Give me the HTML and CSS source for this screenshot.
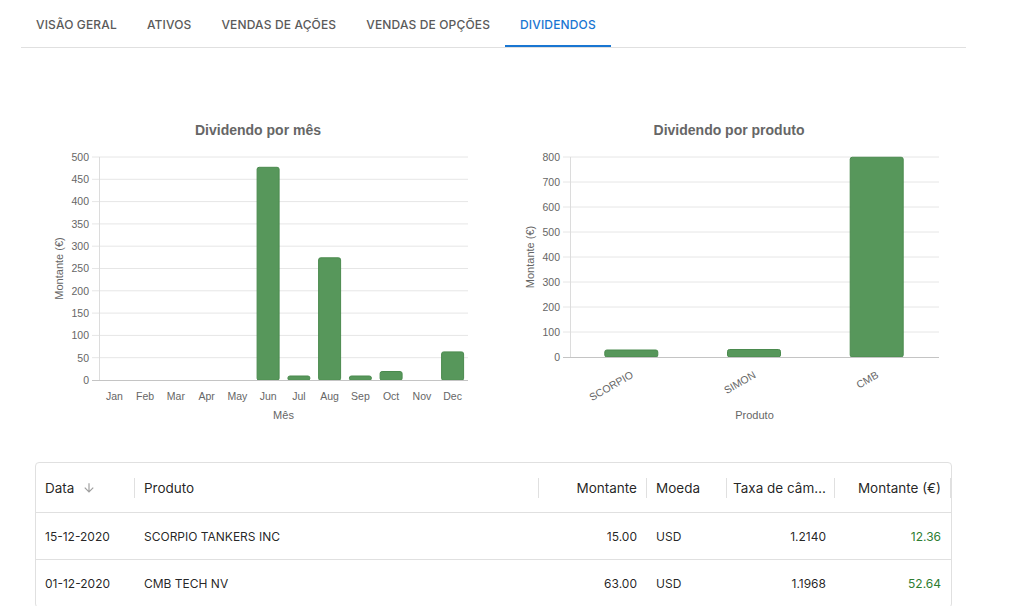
FILE: index.html
```html
<!DOCTYPE html>
<html lang="pt">
<head>
<meta charset="utf-8">
<title>Dividendos</title>
<link rel="stylesheet" href="styles.css">
</head>
<body>
<div class="page">
  <nav class="tabs">
    <div class="tab">Visão geral</div>
    <div class="tab">Ativos</div>
    <div class="tab">Vendas de ações</div>
    <div class="tab">Vendas de opções</div>
    <div class="tab active">Dividendos</div>
  </nav>

  <main class="content">
    <section class="charts">
      <figure class="chart">
        <svg class="chart-svg" width="446" height="330" viewBox="0 0 446 330">
          <text class="c-title" x="223" y="35" text-anchor="middle">Dividendo por mês</text>
          <g class="grid">
            <line x1="57" y1="57" x2="433" y2="57"/>
            <line x1="57" y1="79.3" x2="433" y2="79.3"/>
            <line x1="57" y1="101.6" x2="433" y2="101.6"/>
            <line x1="57" y1="123.9" x2="433" y2="123.9"/>
            <line x1="57" y1="146.2" x2="433" y2="146.2"/>
            <line x1="57" y1="168.5" x2="433" y2="168.5"/>
            <line x1="57" y1="190.8" x2="433" y2="190.8"/>
            <line x1="57" y1="213.1" x2="433" y2="213.1"/>
            <line x1="57" y1="235.4" x2="433" y2="235.4"/>
            <line x1="57" y1="257.7" x2="433" y2="257.7"/>
          </g>
          <line class="axis" x1="64.5" y1="57" x2="64.5" y2="280"/>
          <g class="ticks" text-anchor="end">
            <text x="54" y="60.8">500</text>
            <text x="54" y="83.1">450</text>
            <text x="54" y="105.4">400</text>
            <text x="54" y="127.7">350</text>
            <text x="54" y="150">300</text>
            <text x="54" y="172.3">250</text>
            <text x="54" y="194.6">200</text>
            <text x="54" y="216.9">150</text>
            <text x="54" y="239.2">100</text>
            <text x="54" y="261.5">50</text>
            <text x="54" y="283.8">0</text>
          </g>
          <g class="bars">
            <rect x="222.1" y="67.3" width="22" height="213" rx="2"/>
            <rect x="252.9" y="276" width="22" height="4.3" rx="2"/>
            <rect x="283.6" y="157.8" width="22" height="122.5" rx="2"/>
            <rect x="314.4" y="276" width="22" height="4.3" rx="2"/>
            <rect x="345.1" y="271.5" width="22" height="8.8" rx="2"/>
            <rect x="406.6" y="251.9" width="22" height="28.4" rx="2"/>
          </g>
          <line class="zero" x1="57" y1="280.5" x2="433" y2="280.5"/>
          <g class="ticks" text-anchor="middle">
            <text x="79.4" y="300">Jan</text>
            <text x="110.1" y="300">Feb</text>
            <text x="140.9" y="300">Mar</text>
            <text x="171.6" y="300">Apr</text>
            <text x="202.4" y="300">May</text>
            <text x="233.1" y="300">Jun</text>
            <text x="263.9" y="300">Jul</text>
            <text x="294.6" y="300">Aug</text>
            <text x="325.4" y="300">Sep</text>
            <text x="356.1" y="300">Oct</text>
            <text x="386.9" y="300">Nov</text>
            <text x="417.6" y="300">Dec</text>
          </g>
          <text class="a-title" x="248.5" y="319" text-anchor="middle">Mês</text>
          <text class="a-title" text-anchor="middle" dominant-baseline="central" transform="translate(24 168.5) rotate(-90)">Montante (€)</text>
        </svg>
      </figure>

      <figure class="chart">
        <svg class="chart-svg" width="446" height="330" viewBox="0 0 446 330">
          <text class="c-title" x="223" y="35" text-anchor="middle">Dividendo por produto</text>
          <g class="grid">
            <line x1="57" y1="57" x2="433" y2="57"/>
            <line x1="57" y1="82" x2="433" y2="82"/>
            <line x1="57" y1="107" x2="433" y2="107"/>
            <line x1="57" y1="132" x2="433" y2="132"/>
            <line x1="57" y1="157" x2="433" y2="157"/>
            <line x1="57" y1="182" x2="433" y2="182"/>
            <line x1="57" y1="207" x2="433" y2="207"/>
            <line x1="57" y1="232" x2="433" y2="232"/>
          </g>
          <line class="axis" x1="64.5" y1="57" x2="64.5" y2="257"/>
          <g class="ticks" text-anchor="end">
            <text x="54" y="60.8">800</text>
            <text x="54" y="85.8">700</text>
            <text x="54" y="110.8">600</text>
            <text x="54" y="135.8">500</text>
            <text x="54" y="160.8">400</text>
            <text x="54" y="185.8">300</text>
            <text x="54" y="210.8">200</text>
            <text x="54" y="235.8">100</text>
            <text x="54" y="260.8">0</text>
          </g>
          <g class="bars">
            <rect x="98.8" y="250" width="53" height="7" rx="2"/>
            <rect x="221.5" y="249.5" width="53" height="7.5" rx="2"/>
            <rect x="344.2" y="57.25" width="53" height="199.75" rx="2"/>
          </g>
          <line class="zero" x1="57" y1="257.5" x2="433" y2="257.5"/>
          <g class="ticks" text-anchor="end">
            <text transform="translate(128 277) rotate(-30)">SCORPIO</text>
            <text transform="translate(250.5 277) rotate(-30)">SIMON</text>
            <text transform="translate(373.2 277) rotate(-30)">CMB</text>
          </g>
          <text class="a-title" x="248.5" y="319" text-anchor="middle">Produto</text>
          <text class="a-title" text-anchor="middle" dominant-baseline="central" transform="translate(24 157) rotate(-90)">Montante (€)</text>
        </svg>
      </figure>
    </section>

    <section class="table">
      <div class="row head">
        <div class="cell c-date">Data
          <svg class="sort" width="14" height="14" viewBox="0 0 24 24"><path d="M20 12l-1.41-1.41L13 16.17V4h-2v12.17l-5.58-5.59L4 12l8 8 8-8z"/></svg>
          <span class="sep"></span></div>
        <div class="cell c-prod">Produto<span class="sep"></span></div>
        <div class="cell c-amt num">Montante<span class="sep"></span></div>
        <div class="cell c-cur">Moeda<span class="sep"></span></div>
        <div class="cell c-rate"><span class="trunc">Taxa de câmbio</span><span class="sep"></span></div>
        <div class="cell c-eur num">Montante (€)<span class="sep"></span></div>
      </div>
      <div class="row">
        <div class="cell c-date">15-12-2020</div>
        <div class="cell c-prod">SCORPIO TANKERS INC</div>
        <div class="cell c-amt num">15.00</div>
        <div class="cell c-cur">USD</div>
        <div class="cell c-rate num">1.2140</div>
        <div class="cell c-eur num pos">12.36</div>
      </div>
      <div class="row">
        <div class="cell c-date">01-12-2020</div>
        <div class="cell c-prod">CMB TECH NV</div>
        <div class="cell c-amt num">63.00</div>
        <div class="cell c-cur">USD</div>
        <div class="cell c-rate num">1.1968</div>
        <div class="cell c-eur num pos">52.64</div>
      </div>
    </section>
  </main>
</div>
</body>
</html>
```

FILE: styles.css
```css
html, body {
  margin: 0;
  padding: 0;
  background: #fff;
  overflow: hidden;
}
body {
  font-family: "Inter", "Noto Sans", sans-serif;
  color: rgba(0, 0, 0, 0.87);
}
.page {
  width: 945px;
  margin-left: 21px;
}
.tabs {
  display: flex;
  height: 47px;
  border-bottom: 1px solid #e0e0e0;
}
.tab {
  box-sizing: border-box;
  height: 47px;
  padding: 4px 15px 0;
  display: flex;
  align-items: center;
  font-size: 12px;
  font-weight: 500;
  letter-spacing: 0.15px;
  text-transform: uppercase;
  color: #5a5a5a;
  border-bottom: 2px solid transparent;
}
.tab.active {
  color: #1976d2;
  border-bottom-color: #1976d2;
}
.content {
  padding: 0 14px;
}
.charts {
  display: grid;
  grid-template-columns: 1fr 1fr;
  gap: 24px;
  margin-top: 52px;
}
.chart {
  margin: 0;
  height: 330px;
}
.chart-svg {
  display: block;
  font-family: "Liberation Sans", Arial, sans-serif;
}
.c-title {
  font-size: 14px;
  font-weight: bold;
  fill: #666;
}
.a-title {
  font-size: 11px;
  fill: #666;
}
.ticks text {
  font-size: 10.5px;
  fill: #666;
}
.grid line {
  stroke: #e6e6e6;
  stroke-width: 1;
}
.axis {
  stroke: #dcdcdc;
  stroke-width: 1;
}
.zero {
  stroke: #c4c4c4;
  stroke-width: 1;
}
.bars rect {
  fill: #57975b;
  stroke: #4a8a4e;
  stroke-width: 1;
}
.table {
  margin-top: 32px;
  border: 1px solid #e0e0e0;
  border-radius: 4px;
  font-size: 12px;
}
.row {
  display: flex;
  height: 46px;
  border-bottom: 1px solid #e0e0e0;
}
.row.head {
  height: 49px;
  font-size: 13.5px;
}
.cell {
  position: relative;
  box-sizing: border-box;
  padding: 0 10px 0 9px;
  display: flex;
  align-items: center;
  white-space: nowrap;
  overflow: hidden;
}
.cell.num {
  justify-content: flex-end;
}
.c-date { width: 99px; }
.c-prod { flex: 1; }
.c-amt { width: 108px; }
.c-cur { width: 80px; }
.c-rate { width: 108px; }
.c-eur { width: 116px; }
.c-rate.num { padding-right: 9px; }
.head .c-rate { padding: 0 5px 0 6px; }
.trunc {
  overflow: hidden;
  text-overflow: ellipsis;
  white-space: nowrap;
  display: block;
  max-width: 97px;
}
.sort {
  fill: #9e9e9e;
  margin-left: 8px;
}
.sep {
  position: absolute;
  right: 0;
  top: 15px;
  width: 1px;
  height: 20px;
  background: #e0e0e0;
}
.pos {
  color: #2e7d32;
}
```
